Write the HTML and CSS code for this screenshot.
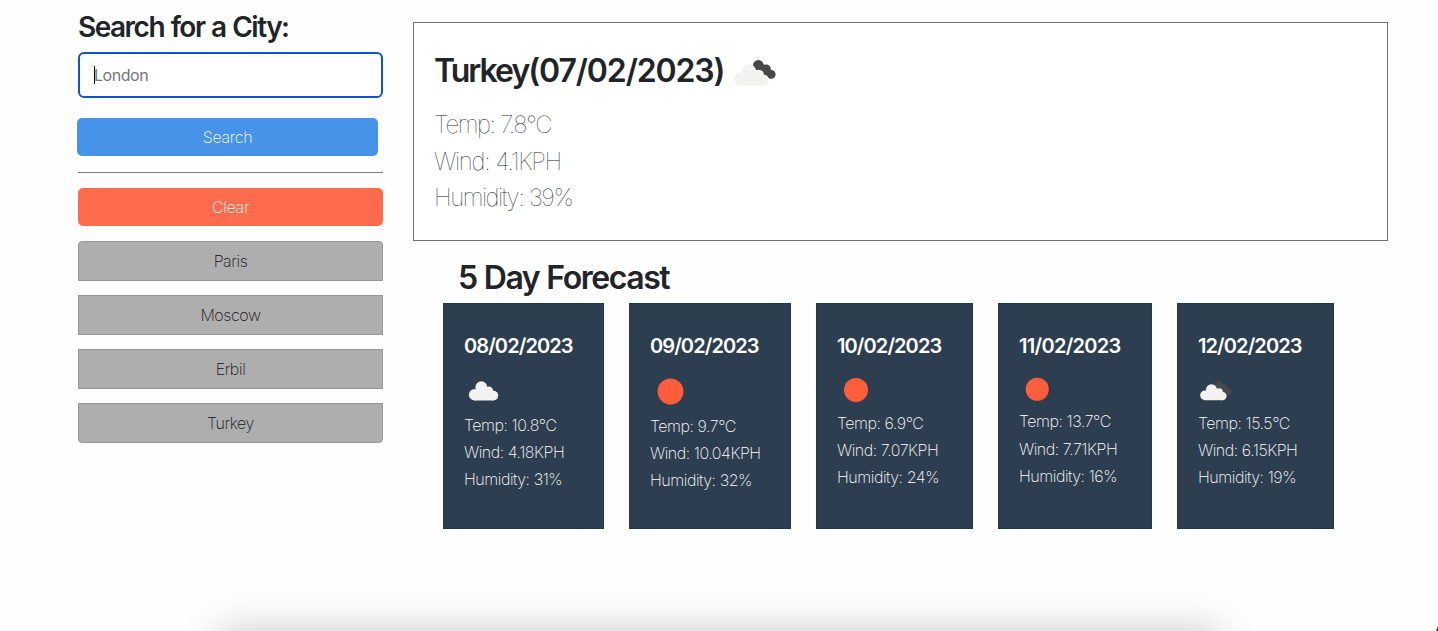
FILE: index.html
```html
<!DOCTYPE html>
<html lang="en">
<head>
<meta charset="utf-8">
<title>Weather Dashboard</title>
<link rel="stylesheet" href="styles.css">
</head>
<body>
<svg class="sprite" aria-hidden="true">
  <symbol id="cloud" viewBox="0 0 40 40">
    <g fill="#f2f2f0">
      <circle cx="10.700" cy="23.700" r="5.800"/>
      <circle cx="17.300" cy="16.200" r="5.900"/>
      <circle cx="24.600" cy="20" r="4.600"/>
      <circle cx="29.400" cy="24.600" r="4.900"/>
      <path d="M10.700 29.500V20l6.600-4 7.300 4 4.800 2v7.500z"/>
    </g>
  </symbol>
  <symbol id="broken" viewBox="0 0 50 50">
    <g fill="#484848">
      <circle cx="28.300" cy="18.200" r="5.300"/>
      <circle cx="36.300" cy="22.200" r="4.600"/>
      <circle cx="41.200" cy="27.400" r="4.400"/>
      <path d="M26 21l5-5 8 4-1 9z"/>
      <path d="M28 20h9l3 11.500-8-4z"/>
    </g>
    <g fill="#f2f2f0">
      <circle cx="10.700" cy="32" r="6.500"/>
      <circle cx="19" cy="24.500" r="7.200"/>
      <circle cx="28.800" cy="28" r="5.300"/>
      <circle cx="33.400" cy="33" r="5.500"/>
      <path d="M10.700 38.500V28l8.300-3 9.800 2 4.600 3v8.500z"/>
    </g>
  </symbol>
  <symbol id="sun" viewBox="0 0 40 40">
    <circle cx="20" cy="20" r="12.600" fill="#ff5e3c"/>
  </symbol>
</svg>
<div class="layout">
  <aside class="sidebar">
    <h3 class="search-title">Search for a City:</h3>
    <div class="field"><span class="caret"></span><span class="placeholder">London</span></div>
    <button class="btn search">Search</button>
    <hr class="rule">
    <button class="btn clear">Clear</button>
    <div class="history">
      <button class="city">Paris</button>
      <button class="city">Moscow</button>
      <button class="city">Erbil</button>
      <button class="city">Turkey</button>
    </div>
  </aside>
  <main class="content">
    <section class="today">
      <h2 class="today-title"><span>Turkey<span class="today-date">(07/02/2023)</span></span><svg class="today-icon"><use href="#broken"/></svg></h2>
      <p class="today-line t1">Temp: 7.8°C</p>
      <p class="today-line t2">Wind: 4.1KPH</p>
      <p class="today-line t3">Humidity: 39%</p>
    </section>
    <h2 class="forecast-title">5 Day Forecast</h2>
    <section class="forecast">
      <article class="card c1"><h5 class="date">08/02/2023</h5><svg class="icon"><use href="#cloud"/></svg><p>Temp: 10.8°C</p><p>Wind: 4.18KPH</p><p>Humidity: 31%</p></article>
      <article class="card c2"><h5 class="date">09/02/2023</h5><svg class="icon"><use href="#sun"/></svg><p>Temp: 9.7°C</p><p>Wind: 10.04KPH</p><p>Humidity: 32%</p></article>
      <article class="card c3"><h5 class="date">10/02/2023</h5><svg class="icon"><use href="#sun"/></svg><p>Temp: 6.9°C</p><p>Wind: 7.07KPH</p><p>Humidity: 24%</p></article>
      <article class="card c4"><h5 class="date">11/02/2023</h5><svg class="icon"><use href="#sun"/></svg><p>Temp: 13.7°C</p><p>Wind: 7.71KPH</p><p>Humidity: 16%</p></article>
      <article class="card c5"><h5 class="date">12/02/2023</h5><svg class="icon"><use href="#broken"/></svg><p>Temp: 15.5°C</p><p>Wind: 6.15KPH</p><p>Humidity: 19%</p></article>
    </section>
  </main>
</div>
<div class="dock-shadow"></div>
<div class="corner"></div>
</body>
</html>
```
FILE: styles.css
```css
* { box-sizing: border-box; }
body {
  margin: 0;
  height: 631px;
  position: relative;
  overflow: hidden;
  background: #fefefe;
  color: #212529;
  font-family: Inter, "Liberation Sans", sans-serif;
  font-size: 16px;
  font-weight: 200;
}
h2, h3, h5, p { margin: 0; white-space: nowrap; }
.sprite { position: absolute; width: 0; height: 0; }
.layout { display: flex; gap: 30px; padding: 0 50px 0 78px; }
.sidebar { width: 305px; padding-top: 10px; display: flex; flex-direction: column; }
.search-title { font-size: 28px; line-height: 35px; font-weight: 600; letter-spacing: -1.500px; word-spacing: 1px; margin-bottom: 7px; }
.field {
  height: 46px;
  border: 2px solid #0d54d0;
  border-radius: 6px;
  background: #fff;
  display: flex;
  align-items: center;
  padding-left: 14px;
}
.caret { width: 1px; height: 18px; background: #000; }
.placeholder { color: #757575; font-weight: 400; letter-spacing: -0.450px; margin-left: -1px; }
.btn { border: 0; border-radius: 5px; height: 38px; color: #fff; font: inherit; padding: 0; letter-spacing: -0.3px; }
.search { background: #4793e9; width: 301px; margin: 20px 0 16px -1px; }
.rule { width: 100%; border: 0; height: 1px; background: #7b7b7b; margin: 0 0 15px; }
.clear { background: #ff6b4d; }
.history { display: flex; flex-direction: column; gap: 14px; margin-top: 15px; }
.city { height: 40px; padding: 0; border: 1px solid #979797; background: #aeaeae; color: #111; font: inherit; letter-spacing: -0.4px; }
.city:first-child { border-radius: 4px 4px 0 0; }
.city:last-child { border-radius: 0 0 4px 4px; }
.content { width: 975px; padding-top: 22px; }
.today { height: 219px; border: 1px solid #707070; background: #fff; padding: 20px; }
.today-title { display: flex; align-items: center; gap: 6px; height: 54px; font-size: 32px; font-weight: 600; letter-spacing: -2px; }
.today-date { letter-spacing: -1.100px; }
.today-icon { width: 50px; height: 50px; margin-top: 4px; }
.today-line { font-size: 24px; line-height: 36.500px; font-weight: 120; letter-spacing: -1.500px; word-spacing: 0.500px; }
.t1 { margin-top: 10px; }
.t2 { letter-spacing: -1.300px; }
.forecast-title { font-size: 32px; line-height: 39px; font-weight: 600; letter-spacing: -1.450px; word-spacing: 0.500px; margin: 17px 0 6px 45px; }
.forecast { display: flex; gap: 25px; margin-left: 30px; }
.card { height: 226px; padding: 30px 20px; border: 1px solid #283747; background: #2c3e50; color: #fff; line-height: 27.200px; letter-spacing: -0.450px; }
.date { font-size: 20px; line-height: 24px; font-weight: 600; letter-spacing: -0.900px; margin-bottom: 13px; }
.icon { display: block; margin-bottom: 0.800px; }
.c1 { width: 161px; } .c1 .icon { width: 40px; height: 40px; }
.c2 { width: 162px; } .c2 .icon { width: 41px; height: 41px; }
.c3 { width: 157px; } .c3 .icon { width: 38px; height: 38px; }
.c4 { width: 154px; } .c4 .icon { width: 36.500px; height: 36.500px; }
.c4 .date { letter-spacing: -0.700px; }
.c5 { width: 157px; } .c5 .icon { width: 38px; height: 38px; margin-left: -1px; }
.dock-shadow {
  position: absolute;
  left: 262px;
  top: 630px;
  width: 914px;
  height: 1px;
  background: #e2e2e2;
  box-shadow: 0 44px 40px 43px rgba(0, 0, 0, 0.22);
}
.corner { position: absolute; right: 0; bottom: 0; width: 2px; height: 5px; background: #333; clip-path: polygon(100% 0, 100% 100%, 0 100%); }
```
